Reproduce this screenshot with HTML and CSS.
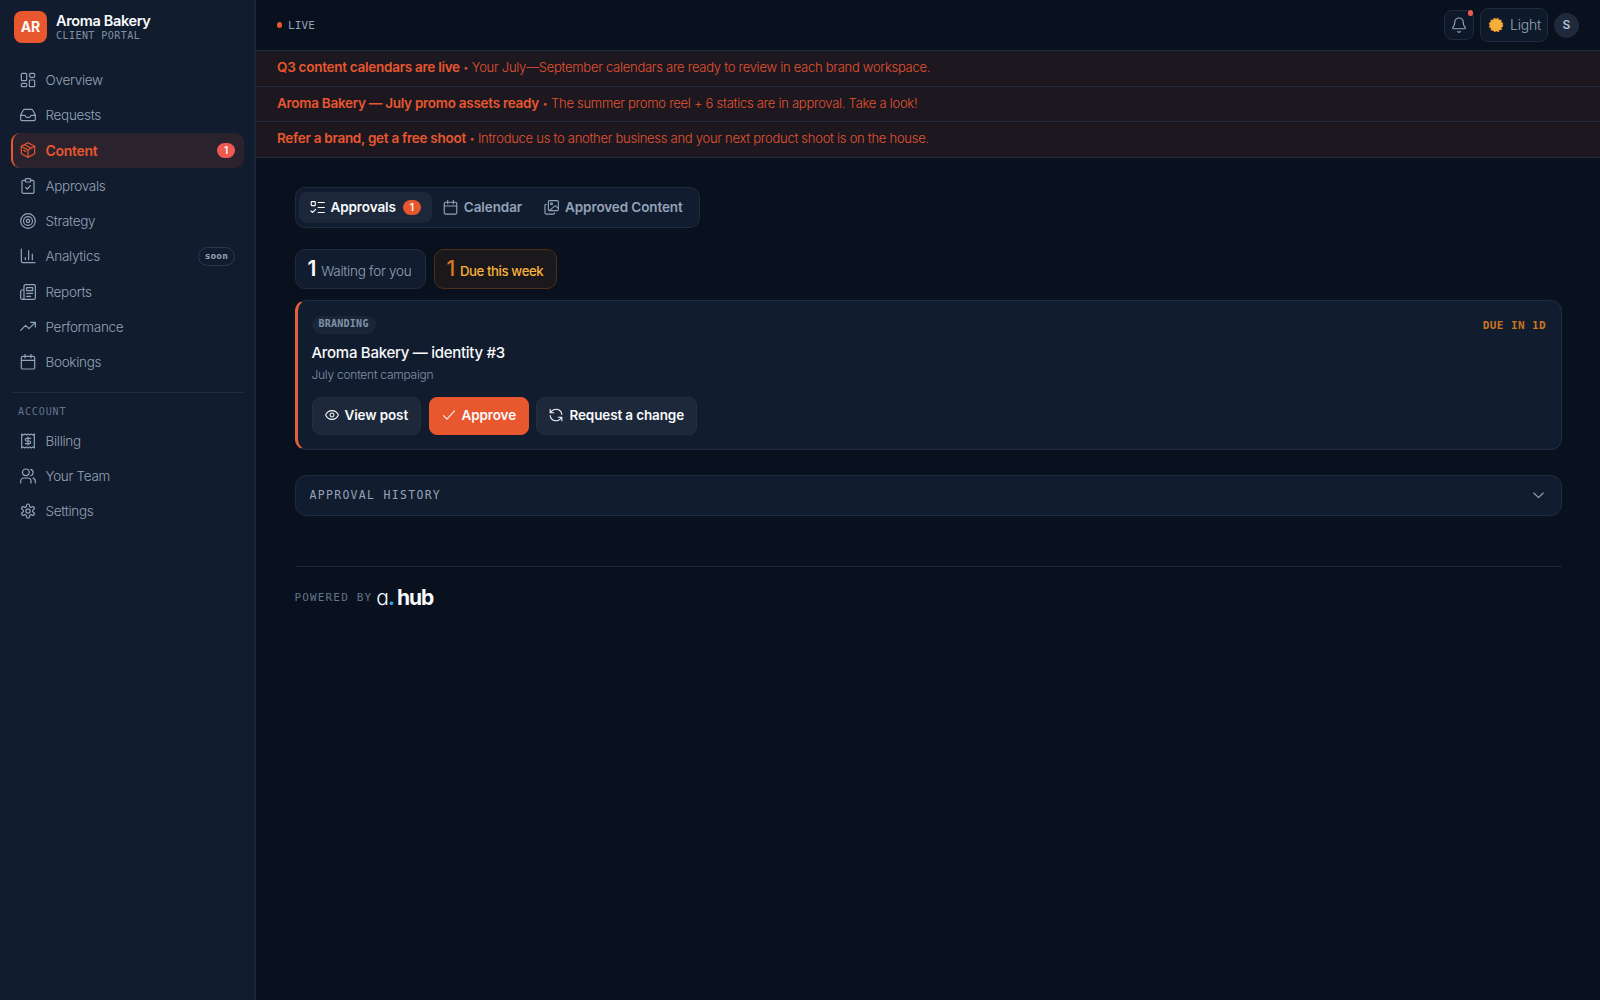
FILE: index.html
```html
<!DOCTYPE html>
<html lang="en">
<head>
    <meta charset="utf-8">
    <meta name="viewport" content="width=device-width, initial-scale=1">
    <title>Aroma Bakery - Client Portal</title>
    <link rel="stylesheet" href="styles.css">
</head>
<body>
    <div class="app">
        <aside class="sidebar">
            <div class="brand">
                <div class="brand-logo">AR</div>
                <div class="brand-text">
                    <span class="brand-name">Aroma Bakery</span>
                    <span class="brand-sub">CLIENT PORTAL</span>
                </div>
            </div>
            <nav class="nav">
                <a class="nav-item"><svg class="icon" viewBox="0 0 24 24"><rect x="2" y="2" width="8" height="11" rx="1.5"/><rect x="14.500" y="2" width="7.500" height="6" rx="1.5"/><rect x="14" y="12" width="8" height="10" rx="1.5"/><rect x="2" y="17" width="8" height="5" rx="1.5"/></svg><span>Overview</span></a>
                <a class="nav-item"><svg class="icon" viewBox="0 0 24 24"><path d="M23 12.500h-6c-1 0-1.500 3-3 3h-4c-1.500 0-2-3-3-3H1"/><path d="M5 4.600 1 12v6.500a2 2 0 0 0 2 2h18a2 2 0 0 0 2-2V12l-4-7.400A2 2 0 0 0 17.300 3.500H6.700A2 2 0 0 0 5 4.600z"/></svg><span>Requests</span></a>
                <a class="nav-item active"><svg class="icon" viewBox="0 0 24 24"><path d="M12 1 22 6.500v11L12 23 2 17.500v-11z"/><path d="M2 6.500 12 12l10-5.500M12 12v11M7 4l10 5.300M5.500 12.500l3 1.700"/></svg><span>Content</span><b class="badge">1</b></a>
                <a class="nav-item"><svg class="icon" viewBox="0 0 24 24"><path d="M16 3.500h3a2 2 0 0 1 2 2V21a2 2 0 0 1-2 2H5a2 2 0 0 1-2-2V5.500a2 2 0 0 1 2-2h3"/><rect x="8" y="1" width="8" height="5" rx="1.500"/><path d="m8.500 14 2.500 2.500 4.500-5"/></svg><span>Approvals</span></a>
                <a class="nav-item"><svg class="icon" viewBox="0 0 24 24"><circle cx="12" cy="12" r="11"/><circle cx="12" cy="12" r="6.700"/><circle cx="12" cy="12" r="2.500"/></svg><span>Strategy</span></a>
                <a class="nav-item"><svg class="icon" viewBox="0 0 24 24"><path d="M2 1.500V20a2 2 0 0 0 2 2h18.500M8 17.500v-3M13 17.500V4M18.500 17.500V9"/></svg><span>Analytics</span><b class="soon">soon</b></a>
                <a class="nav-item"><svg class="icon" viewBox="0 0 24 24"><path d="M3.500 23H21a2 2 0 0 0 2-2V3a2 2 0 0 0-2-2H8a2 2 0 0 0-2 2v17.500a2.500 2.500 0 0 1-5 0V11a2 2 0 0 1 2-2h3"/><rect x="10" y="5.500" width="9" height="4.500"/><path d="M10 14h9M10 18.500h6"/></svg><span>Reports</span></a>
                <a class="nav-item"><svg class="icon" viewBox="0 0 24 24"><path d="m1 17 7.500-7.500 5 5L23 5M16 5h7v7"/></svg><span>Performance</span></a>
                <a class="nav-item"><svg class="icon" viewBox="0 0 24 24"><rect x="2" y="3.500" width="20" height="19" rx="2"/><path d="M7.500.8v5M16.500.8v5M2 9.500h20"/></svg><span>Bookings</span></a>
            </nav>
            <div class="nav-label">ACCOUNT</div>
            <nav class="nav">
                <a class="nav-item"><svg class="icon" viewBox="0 0 24 24"><path d="M2.500 1.500 4.900 3l2.400-1.500L9.600 3 12 1.500 14.400 3l2.300-1.500L19.100 3l2.400-1.500v21L19.100 21l-2.400 1.500-2.300-1.500-2.400 1.500L9.600 21l-2.300 1.500L4.900 21l-2.400 1.500z"/><path d="M16 8h-6a2 2 0 0 0 0 4h4a2 2 0 0 1 0 4H8M12 6v12"/></svg><span>Billing</span></a>
                <a class="nav-item"><svg class="icon" viewBox="0 0 24 24"><path d="M16.500 22.500V20a5 5 0 0 0-5-5H6a5 5 0 0 0-5 5v2.500M23 22.500V20a5 5 0 0 0-3.500-4.800M16 2a5 5 0 0 1 0 9.600"/><circle cx="8.800" cy="6.500" r="5"/></svg><span>Your Team</span></a>
                <a class="nav-item"><svg class="icon" viewBox="0 0 24 24"><path d="M12.220 1.500h-.44a2 2 0 0 0-2 2v.68a2 2 0 0 1-1 1.730l-.43.25a2 2 0 0 1-2 0l-.65-.38a2 2 0 0 0-2.730.73l-.22.38a2 2 0 0 0 .73 2.730l.65.4a2 2 0 0 1 1 1.720v.51a2 2 0 0 1-1 1.740l-.65.39a2 2 0 0 0-.73 2.730l.22.38a2 2 0 0 0 2.730.73l.65-.38a2 2 0 0 1 2 0l.43.25a2 2 0 0 1 1 1.730v.68a2 2 0 0 0 2 2h.44a2 2 0 0 0 2-2v-.68a2 2 0 0 1 1-1.730l.43-.25a2 2 0 0 1 2 0l.65.38a2 2 0 0 0 2.730-.73l.22-.39a2 2 0 0 0-.73-2.730l-.65-.38a2 2 0 0 1-1-1.740v-.5a2 2 0 0 1 1-1.740l.65-.39a2 2 0 0 0 .73-2.730l-.22-.38a2 2 0 0 0-2.730-.73l-.65.38a2 2 0 0 1-2 0l-.43-.25a2 2 0 0 1-1-1.730V3.500a2 2 0 0 0-2-2z"/><circle cx="12" cy="12" r="3.200"/></svg><span>Settings</span></a>
            </nav>
        </aside>

        <div class="main">
            <header class="topbar">
                <div class="live"><i class="live-dot"></i><span>LIVE</span></div>
                <div class="topbar-actions">
                    <button class="bell"><svg class="icon" viewBox="0 0 24 24"><path d="M2.800 15.600A1.200 1.200 0 0 0 3.700 17.600h16.600a1.200 1.200 0 0 0 .9-2C19.700 14 18.300 12.500 18.300 7.800a6.300 6.300 0 0 0-12.600 0c0 4.700-1.400 6.200-2.900 7.800M10 21.800a2.300 2.300 0 0 0 4 0"/></svg><i class="bell-dot"></i></button>
                    <button class="theme"><svg class="sun" viewBox="0 0 16 16"><circle class="sun-rays" cx="8" cy="8" r="6.500"/><circle class="sun-core" cx="8" cy="8" r="6.300"/></svg><span>Light</span></button>
                    <div class="avatar">S</div>
                </div>
            </header>

            <div class="notice"><strong>Q3 content calendars are live</strong><i>•</i><span>Your July—September calendars are ready to review in each brand workspace.</span></div>
            <div class="notice"><strong>Aroma Bakery — July promo assets ready</strong><i>•</i><span>The summer promo reel + 6 statics are in approval. Take a look!</span></div>
            <div class="notice"><strong>Refer a brand, get a free shoot</strong><i>•</i><span>Introduce us to another business and your next product shoot is on the house.</span></div>

            <main class="content">
                <div class="tabs">
                    <button class="tab active"><svg class="icon" viewBox="0 0 24 24"><rect x="2" y="2.500" width="6.500" height="6.500" rx="1"/><path d="m1.500 17.500 2.500 2.500 5-5M13 4h10M13 12h10M13 20h10"/></svg><span>Approvals</span><b class="badge">1</b></button>
                    <button class="tab"><svg class="icon" viewBox="0 0 24 24"><rect x="2" y="3.500" width="20" height="19" rx="2"/><path d="M7.500.8v5M16.500.8v5M2 9.500h20"/></svg><span>Calendar</span></button>
                    <button class="tab"><svg class="icon" viewBox="0 0 24 24"><rect x="7" y="1" width="16" height="16" rx="2"/><path d="M3.500 7A2 2 0 0 0 1.500 9v11.500a2 2 0 0 0 2 2H15a2 2 0 0 0 2-2M9 16.500l9-7.500 4.500 4"/><circle cx="12" cy="6" r="1.500"/></svg><span>Approved Content</span></button>
                </div>

                <div class="stats">
                    <div class="stat"><strong>1</strong><span>Waiting for you</span></div>
                    <div class="stat due"><strong>1</strong><span>Due this week</span></div>
                </div>

                <article class="card">
                    <div class="card-head">
                        <span class="tag">BRANDING</span>
                        <span class="card-due">DUE IN 1D</span>
                    </div>
                    <h2>Aroma Bakery — identity #3</h2>
                    <p>July content campaign</p>
                    <div class="card-actions">
                        <button class="btn"><svg class="icon" viewBox="0 0 24 24"><path d="M1 12C3 7.500 7.500 4.500 12 4.500s9 3 11 7.500c-2 4.500-6.500 7.500-11 7.500S3 16.500 1 12z"/><circle cx="12" cy="12" r="3.300"/></svg><span>View post</span></button>
                        <button class="btn primary"><svg class="icon" viewBox="0 0 24 24"><path d="M2.500 13 8.500 19 21.500 5"/></svg><span>Approve</span></button>
                        <button class="btn"><svg class="icon" viewBox="0 0 24 24"><path d="M22 11a10 10 0 0 0-17-6L2 8M2 2v6h6M2 13a10 10 0 0 0 17 6l3-3M22 22v-6h-6"/></svg><span>Request a change</span></button>
                    </div>
                </article>

                <div class="history">
                    <span>APPROVAL HISTORY</span>
                    <svg class="icon" viewBox="0 0 24 24"><path d="m4.500 8 7.500 7.500L19.500 8"/></svg>
                </div>

                <footer class="footer">
                    <span class="powered">POWERED BY</span>
                    <div class="hub-logo"><span class="hub-a">a</span><span class="hub-dot">.</span><strong>hub</strong></div>
                </footer>
            </main>
        </div>
    </div>
</body>
</html>
```
FILE: styles.css
```css
* {
    box-sizing: border-box;
}

body {
    margin: 0;
    background: #09111e;
    color: #f8fafc;
    font-family: Inter, "Liberation Sans", sans-serif;
    font-size: 13.5px;
}

button {
    font: inherit;
    color: inherit;
    border: 0;
    padding: 0;
    background: none;
    white-space: nowrap;
}

i {
    font-style: normal;
}

.icon {
    width: 15px;
    height: 15px;
    flex: none;
    fill: none;
    stroke: currentColor;
    stroke-width: 1.8;
    stroke-linecap: round;
    stroke-linejoin: round;
}

.app {
    display: flex;
    height: 1000px;
    overflow: hidden;
}

/* sidebar */
.sidebar {
    width: 256px;
    flex: none;
    padding: 11px 10px 0 12px;
    background: #111c2e;
    border-right: 2px solid #1b263a;
}

.brand {
    display: flex;
    gap: 9px;
    padding-left: 2px;
    height: 51px;
}

.brand-logo {
    width: 33px;
    height: 32px;
    border-radius: 8px;
    background: #e8572e;
    font-weight: 700;
    font-size: 14px;
    line-height: 32px;
    text-align: center;
}

.brand-text {
    display: flex;
    flex-direction: column;
    align-items: flex-start;
}

.brand-name {
    font-size: 14.5px;
    font-weight: 600;
    line-height: 19px;
    letter-spacing: -0.35px;
}

.brand-sub {
    font-family: "DejaVu Sans Mono", monospace;
    font-size: 10px;
    line-height: 12px;
    letter-spacing: 0.45px;
    color: #8291a8;
}

.nav {
    display: flex;
    flex-direction: column;
}

.nav-item {
    display: flex;
    align-items: center;
    gap: 9.5px;
    height: 35.35px;
    padding: 0 9px 0 8px;
    color: #94a3b8;
    font-weight: 300;
    letter-spacing: -0.3px;
}

.nav-item .icon {
    width: 16px;
    height: 16px;
}

.nav-item.active {
    margin-left: -1px;
    border-left: 2px solid #e8572e;
    padding-left: 7px;
    border-radius: 9px;
    background: #2a222d;
    color: #e8572e;
    font-size: 14px;
    font-weight: 600;
}

.badge {
    width: 18px;
    height: 15px;
    border-radius: 8px;
    background: #e8572e;
    color: #fff;
    font-size: 10px;
    font-weight: 600;
    line-height: 14px;
    text-align: center;
}

.nav-item .badge {
    margin-left: auto;
    background: #ee5a50;
}

.soon {
    margin-left: auto;
    padding: 0 6px;
    height: 19px;
    border: 1px solid #2c394d;
    border-radius: 10px;
    font-family: "DejaVu Sans Mono", monospace;
    font-size: 9.5px;
    font-weight: 700;
    line-height: 16px;
    letter-spacing: 0.1px;
}

.nav-label {
    margin-top: 12px;
    border-top: 1px solid #1f2b3e;
    padding: 12px 6px 0;
    height: 31px;
    font-family: "DejaVu Sans Mono", monospace;
    font-size: 10px;
    line-height: 13px;
    letter-spacing: 0.9px;
    color: #64748b;
}

/* top bar */
.main {
    flex: 1;
    min-width: 0;
}

.topbar {
    display: flex;
    align-items: center;
    justify-content: space-between;
    height: 51px;
    padding: 0 21px;
    border-bottom: 1px solid #1e2a3f;
}

.live {
    display: flex;
    align-items: center;
    gap: 6px;
    font-family: "DejaVu Sans Mono", monospace;
    font-size: 11px;
    letter-spacing: 0.1px;
    color: #94a3b8;
}

.live-dot {
    width: 5px;
    height: 6px;
    border-radius: 3px;
    background: #e8572e;
}

.topbar-actions {
    display: flex;
    align-items: center;
    gap: 6px;
    color: #94a3b8;
}

.bell {
    position: relative;
    width: 30px;
    height: 30px;
    border: 1px solid #1f2b3e;
    border-radius: 8px;
    background: #0e1828;
    display: grid;
    place-items: center;
}

.bell .icon {
    width: 16px;
    height: 16px;
}

.bell-dot {
    position: absolute;
    top: -1px;
    right: 0;
    width: 5px;
    height: 6px;
    border-radius: 3px;
    background: #ee5a50;
}

.theme {
    display: flex;
    align-items: center;
    gap: 6px;
    width: 68px;
    height: 34px;
    padding: 0 0 1px 7px;
    border: 1px solid #1f2b3e;
    border-radius: 8px;
    background: #0e1a2a;
    font-size: 14px;
    font-weight: 300;
    letter-spacing: -0.2px;
}

.sun {
    width: 16px;
    height: 16px;
    flex: none;
}

.sun-rays {
    fill: none;
    stroke: #e8862f;
    stroke-width: 1.5;
    stroke-dasharray: 2 1.4;
}

.sun-core {
    fill: #f5b03a;
}

.avatar {
    width: 25px;
    height: 25px;
    border-radius: 50%;
    background: #1e293b;
    font-size: 12px;
    font-weight: 600;
    line-height: 24px;
    text-align: center;
    color: #b4c0d0;
}

/* announcements */
.notice {
    display: flex;
    align-items: center;
    height: 35.5px;
    padding: 0 21px 2px;
    border-bottom: 1px solid #222a3e;
    background: #1d1720;
    color: #e0532f;
    font-size: 13px;
    font-weight: 300;
    letter-spacing: -0.27px;
}

.notice strong {
    font-size: 13.5px;
    font-weight: 600;
    color: #e8572e;
}

.notice i {
    width: 12px;
    text-align: center;
    font-size: 10px;
}

/* page */
.content {
    padding: 29.5px 38px 0 38.5px;
}

.tabs {
    display: flex;
    width: 405px;
    height: 41px;
    padding: 4px 3px;
    border: 1px solid #1f2b3e;
    border-radius: 10px;
    background: #111c2e;
}

.tab {
    display: flex;
    align-items: center;
    gap: 6px;
    padding: 0 11px 1px;
    border-radius: 8px;
    color: #94a3b8;
    font-weight: 600;
    letter-spacing: -0.1px;
}

.tab.active {
    background: #1c2739;
    color: #f8fafc;
}

.tab .badge {
    margin-left: 1px;
}

.stats {
    display: flex;
    gap: 8px;
    margin-top: 21px;
}

.stat {
    display: flex;
    align-items: baseline;
    gap: 5px;
    height: 40px;
    padding: 6px 13px 6px 12px;
    border: 1px solid #1f2b3e;
    border-radius: 10px;
    background: #111c2e;
    font-weight: 300;
    letter-spacing: -0.25px;
    color: #94a3b8;
}

.stat strong {
    font-size: 21px;
    font-weight: 600;
    color: #f8fafc;
}

.stat.due {
    border-color: #4d3018;
    background: #1b181b;
    color: #f9b13c;
    font-size: 13.2px;
    font-weight: 500;
    letter-spacing: -0.4px;
}

.stat.due strong {
    font-weight: 500;
    color: #d57a22;
}

.card {
    margin-top: 11px;
    height: 150px;
    padding: 15px 15px 0 14px;
    border: 1px solid #1f2b44;
    border-left: 3px solid #e0603a;
    border-radius: 11px;
    background: #111c2e;
}

.card-head {
    display: flex;
    justify-content: space-between;
}

.tag {
    height: 18px;
    padding: 0 7px;
    border-radius: 9px;
    background: #1a2637;
    font-family: "DejaVu Sans Mono", monospace;
    font-size: 10px;
    font-weight: 700;
    line-height: 15px;
    letter-spacing: 0.25px;
    color: #8291a8;
}

.card-due {
    padding-top: 1px;
    font-family: "DejaVu Sans Mono", monospace;
    font-size: 11px;
    font-weight: 700;
    line-height: 17px;
    letter-spacing: 0.4px;
    color: #c9751f;
}

.card h2 {
    margin: 8px 0 0;
    font-size: 15px;
    font-weight: 500;
    line-height: 22px;
    letter-spacing: -0.28px;
}

.card p {
    margin: 3px 0 0;
    font-size: 12px;
    font-weight: 300;
    line-height: 16px;
    letter-spacing: -0.25px;
    color: #8291a8;
}

.card-actions {
    display: flex;
    gap: 7.5px;
    margin-top: 14px;
}

.btn {
    display: flex;
    align-items: center;
    gap: 6px;
    height: 38px;
    padding: 0 12px 2px;
    border: 1px solid #222e40;
    border-radius: 8px;
    background: #1d283a;
    font-weight: 600;
    letter-spacing: -0.13px;
}

.btn .icon {
    width: 14px;
    height: 14px;
}

.btn.primary {
    border-color: #e8572e;
    background: #e8572e;
}

.history {
    display: flex;
    align-items: center;
    justify-content: space-between;
    height: 41px;
    margin-top: 25px;
    padding: 0 15px 1px 14px;
    border: 1px solid #1f2b44;
    border-radius: 11px;
    background: #111c2e;
    color: #94a3b8;
    font-family: "DejaVu Sans Mono", monospace;
    font-size: 11.5px;
    letter-spacing: 1.3px;
}

.footer {
    display: flex;
    align-items: center;
    gap: 4px;
    margin-top: 49.5px;
    padding-top: 18px;
    border-top: 1px solid #1c2636;
}

.powered {
    font-family: "DejaVu Sans Mono", monospace;
    font-size: 11px;
    letter-spacing: 1.15px;
    color: #64748b;
}

.hub-logo {
    display: flex;
    align-items: baseline;
    font-size: 21px;
    line-height: 26px;
    letter-spacing: -1px;
}

.hub-a {
    font-weight: 300;
    font-feature-settings: "cv11";
}

.hub-dot {
    color: #38a8e0;
    font-weight: 700;
}

.hub-logo strong {
    font-weight: 700;
    margin-left: 3px;
}
```
